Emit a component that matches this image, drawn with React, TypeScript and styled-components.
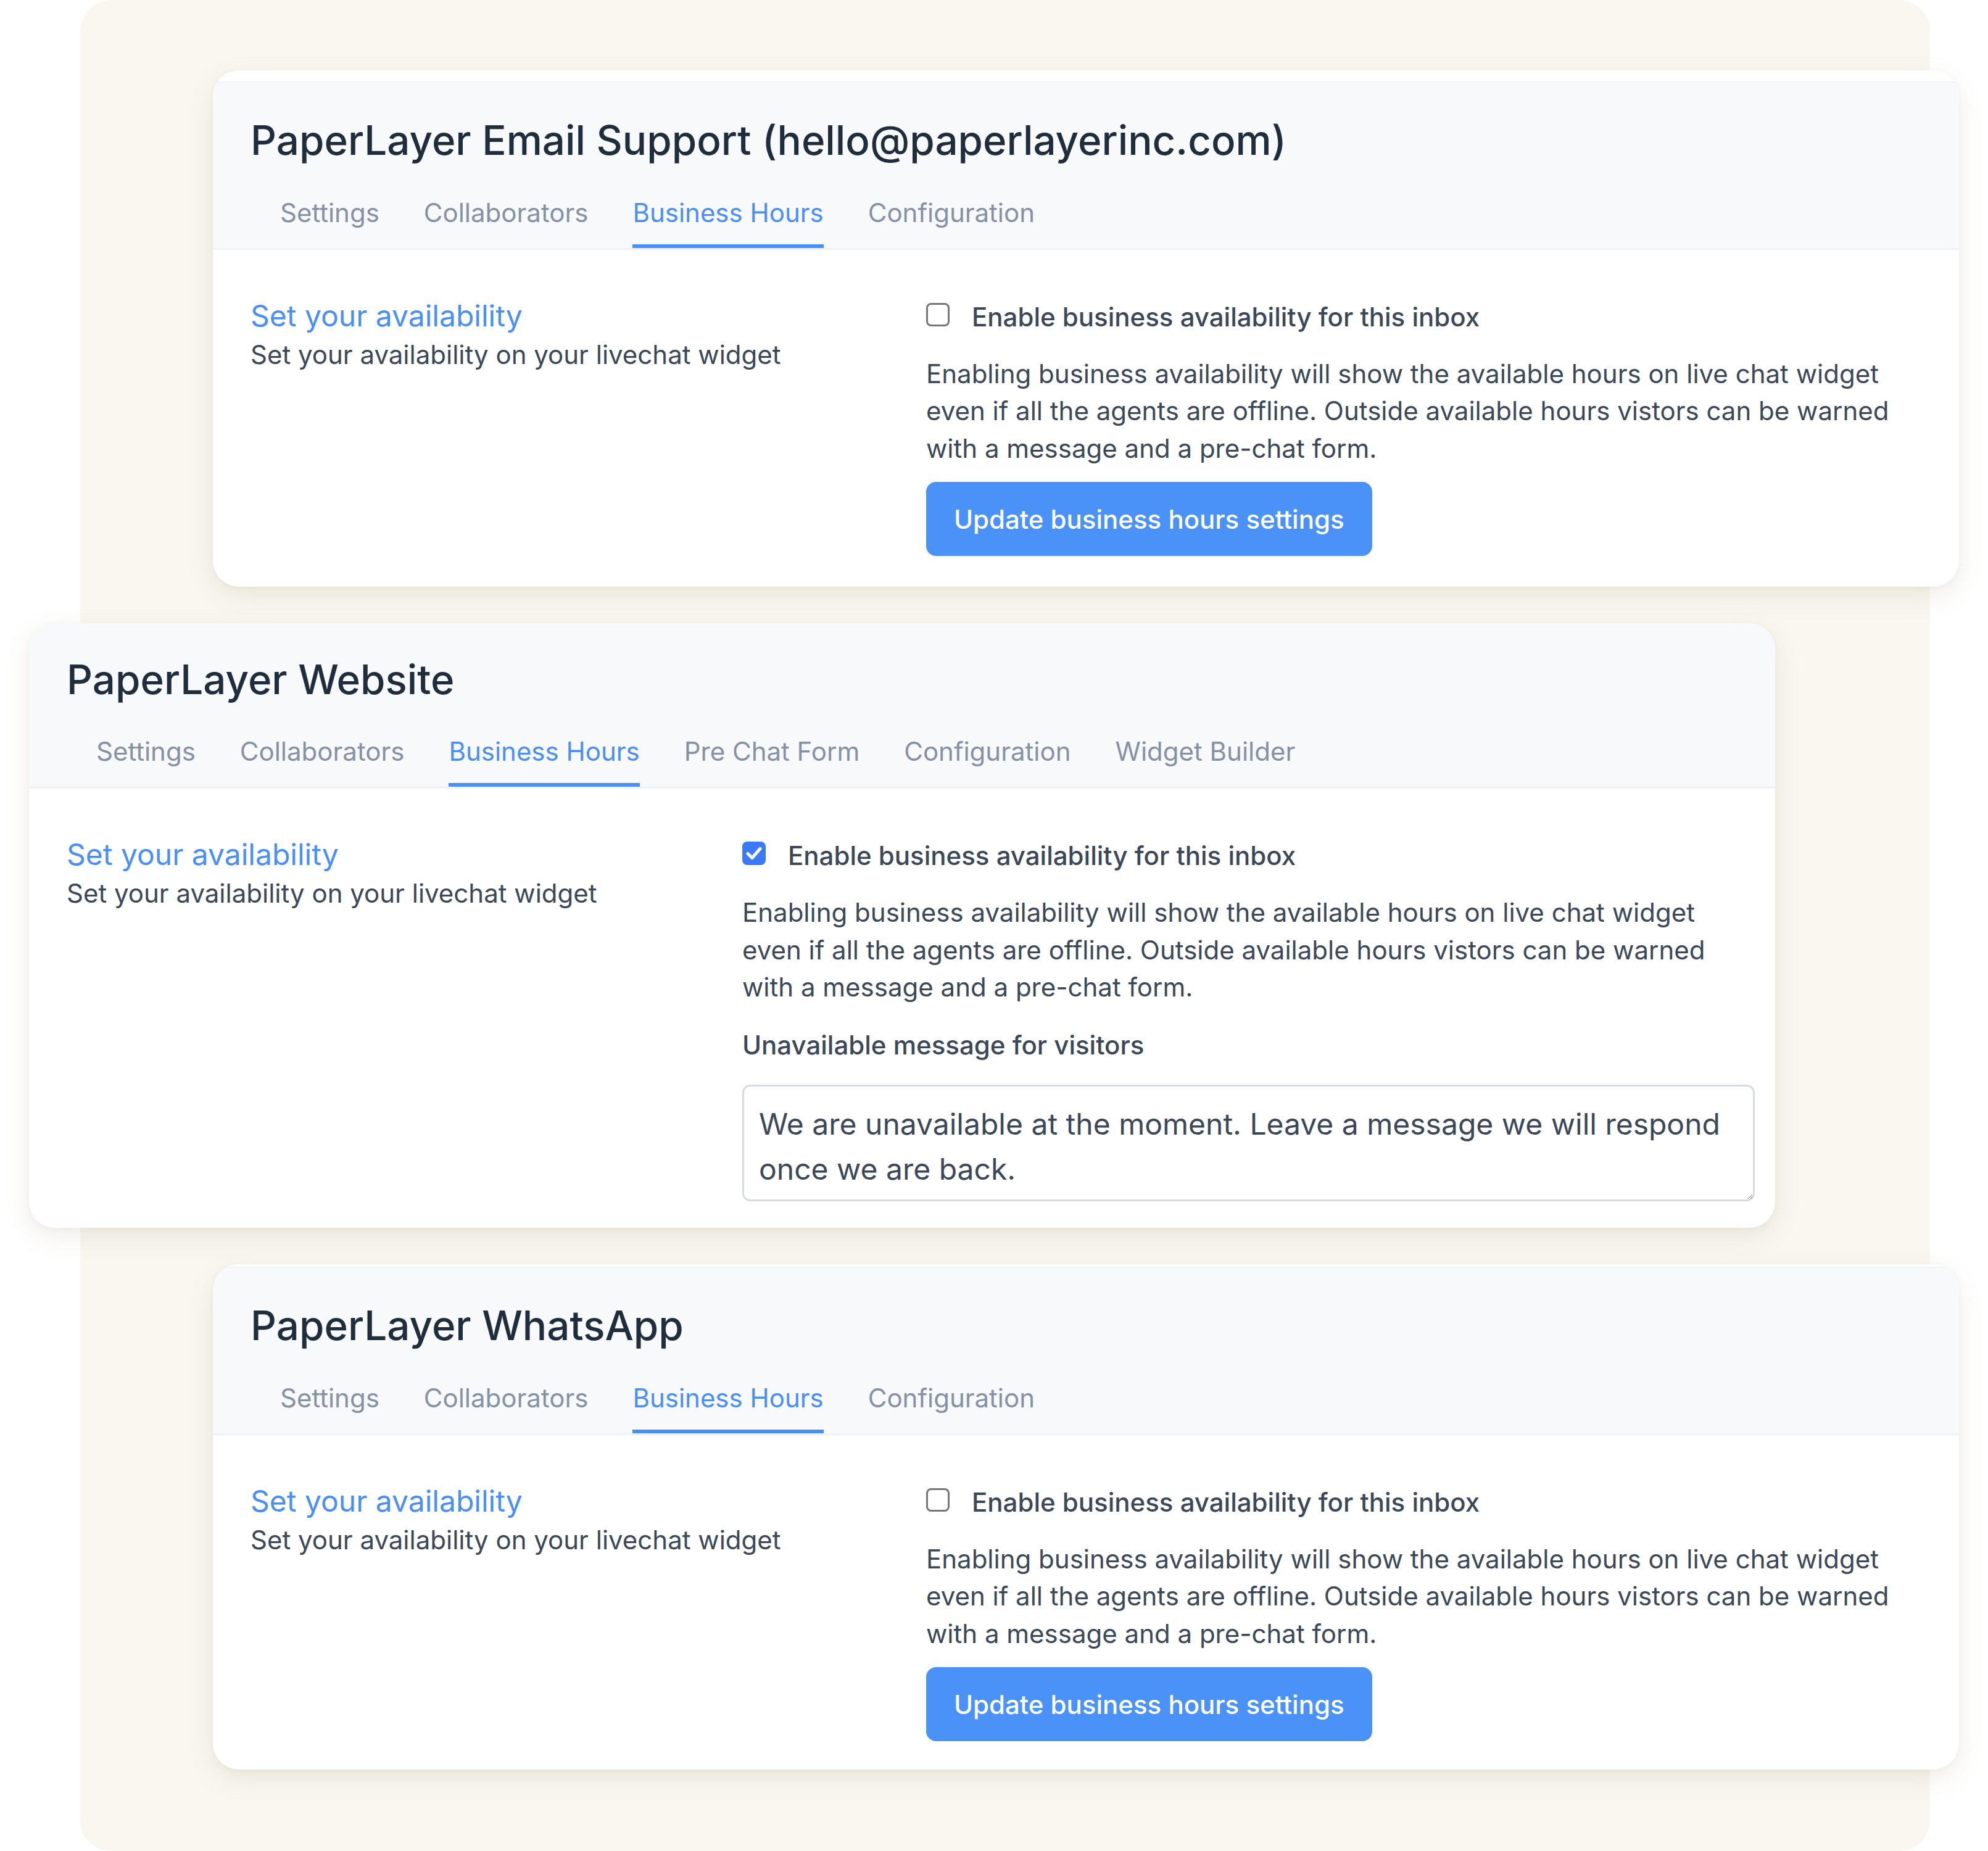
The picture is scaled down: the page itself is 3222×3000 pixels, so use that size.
import React from "react";
import styled, { createGlobalStyle } from "styled-components";

const GlobalStyle = createGlobalStyle`
  html, body { margin: 0; padding: 0; background: #ffffff; }
  body { font-family: Inter, "Noto Sans", "Liberation Sans", sans-serif; -webkit-font-smoothing: antialiased; }
  * { box-sizing: border-box; }
`;

const Page = styled.div`
  width: 3222px;
  height: 3000px;
  overflow: hidden;
  background: #ffffff;
`;

const Backdrop = styled.div`
  margin-left: 130px;
  width: 2998px;
  height: 3000px;
  background: #f9f7f0;
  border-radius: 50px;
  padding-top: 114px;
  display: flex;
  flex-direction: column;
  gap: 59px;
`;

const Card = styled.section<{ $offset: number; $strip: number }>`
  margin-left: ${(p) => p.$offset}px;
  width: 2830px;
  background: #ffffff;
  border-radius: 42px;
  overflow: hidden;
  padding-top: ${(p) => p.$strip}px;
  box-shadow: 0 14px 44px rgba(110, 90, 50, 0.11), 0 2px 8px rgba(110, 90, 50, 0.05);
  flex: none;
`;

const Header = styled.header<{ $line: boolean }>`
  background: #f8f9fb;
  border-top: ${(p) => (p.$line ? "2px solid #f0f3f7" : "0 solid transparent")};
  border-bottom: 3px solid #eef1f5;
  padding: ${(p) => (p.$line ? 55 : 53)}px 0 0 61px;
`;

const Title = styled.h1`
  margin: 0;
  font-size: 65.5px;
  line-height: 1.2;
  font-weight: 500;
  color: #1f2d3d;
`;

const TabList = styled.nav<{ $tight: boolean }>`
  display: flex;
  gap: 72px;
  padding-left: 48px;
  margin-top: ${(p) => (p.$tight ? 51 : 52)}px;
`;

const Tab = styled.span<{ $active?: boolean }>`
  font-size: 42px;
  line-height: 1.2;
  font-weight: 400;
  color: ${(p) => (p.$active ? "#4a8ff7" : "#8591a5")};
  padding-bottom: 26px;
  border-bottom: 6px solid ${(p) => (p.$active ? "#4a8ff7" : "transparent")};
  white-space: nowrap;
`;

const Body = styled.div<{ $bottom: number }>`
  display: flex;
  padding: 78px 33px ${(p) => p.$bottom}px 61px;
`;

const Intro = styled.div`
  flex: 0 0 1095px;
`;

const IntroTitle = styled.h2`
  margin: 0;
  font-size: 48px;
  line-height: 1.2;
  font-weight: 400;
  color: #4a8ff7;
`;

const IntroText = styled.p`
  margin: 4px 0 0;
  font-size: 42px;
  line-height: 1.45;
  color: #3c4858;
`;

const Settings = styled.div`
  flex: 1;
  min-width: 0;
  display: flex;
  flex-direction: column;
  align-items: flex-start;
  padding-top: 1px;
`;

const CheckRow = styled.label`
  display: flex;
  align-items: flex-start;
  gap: 36px;
`;

const Box = styled.span<{ $checked: boolean }>`
  flex: none;
  width: 38px;
  height: 38px;
  margin-top: 7px;
  border-radius: 8px;
  border: ${(p) => (p.$checked ? "0" : "3px solid #767676")};
  background: ${(p) => (p.$checked ? "#3a7af5" : "#ffffff")};
  display: flex;
  align-items: center;
  justify-content: center;
`;

const CheckLabel = styled.span`
  font-size: 42px;
  line-height: 60px;
  font-weight: 500;
  color: #3c4858;
`;

const Help = styled.p`
  margin: 32px 0 0;
  max-width: 1585px;
  font-size: 42px;
  line-height: 60.5px;
  color: #3c4858;
`;

const FieldLabel = styled.div`
  margin-top: 33px;
  font-size: 42px;
  line-height: 60px;
  font-weight: 500;
  color: #3c4858;
`;

const MessageInput = styled.textarea`
  margin-top: 34px;
  width: 100%;
  height: 189px;
  border: 3px solid #d3dce8;
  border-radius: 13px;
  padding: 24px 24px;
  font-family: Inter, "Noto Sans", "Liberation Sans", sans-serif;
  font-size: 48px;
  line-height: 73px;
  color: #3c4858;
  background: #ffffff;
  outline: none;
`;

const PrimaryButton = styled.button`
  margin-top: 24px;
  height: 120px;
  padding: 0 45px;
  border: none;
  border-radius: 16px;
  background: #4a92f8;
  color: #ffffff;
  font-family: Inter, "Noto Sans", "Liberation Sans", sans-serif;
  font-size: 42px;
  font-weight: 500;
`;

const Check = () => (
  <svg width="26" height="22" viewBox="0 0 26 22" fill="none">
    <path d="M3 11.5 L10 18.5 L23 3.5" stroke="#ffffff" strokeWidth="5" strokeLinecap="round" strokeLinejoin="round" />
  </svg>
);

type InboxProps = {
  name: string;
  tabs: string[];
  offset: number;
  strip: number;
  bottom: number;
  enabled?: boolean;
};

const HELP =
  "Enabling business availability will show the available hours on live chat widget even if all the agents are offline. Outside available hours vistors can be warned with a message and a pre-chat form.";

const InboxCard = ({ name, tabs, offset, strip, bottom, enabled = false }: InboxProps) => (
  <Card $offset={offset} $strip={strip}>
    <Header $line={strip > 0}>
      <Title>{name}</Title>
      <TabList $tight={strip === 0}>
        {tabs.map((t) => (
          <Tab key={t} $active={t === "Business Hours"}>
            {t}
          </Tab>
        ))}
      </TabList>
    </Header>
    <Body $bottom={bottom}>
      <Intro>
        <IntroTitle>Set your availability</IntroTitle>
        <IntroText>Set your availability on your livechat widget</IntroText>
      </Intro>
      <Settings>
        <CheckRow>
          <Box $checked={enabled}>{enabled && <Check />}</Box>
          <CheckLabel>Enable business availability for this inbox</CheckLabel>
        </CheckRow>
        <Help>{HELP}</Help>
        {enabled ? (
          <>
            <FieldLabel>Unavailable message for visitors</FieldLabel>
            <MessageInput defaultValue="We are unavailable at the moment. Leave a message we will respond once we are back." />
          </>
        ) : (
          <PrimaryButton>Update business hours settings</PrimaryButton>
        )}
      </Settings>
    </Body>
  </Card>
);

export default function App() {
  return (
    <Page>
      <GlobalStyle />
      <Backdrop>
        <InboxCard
          name="PaperLayer Email Support (hello@paperlayerinc.com)"
          tabs={["Settings", "Collaborators", "Business Hours", "Configuration"]}
          offset={215}
          strip={18}
          bottom={50}
        />
        <InboxCard
          name="PaperLayer Website"
          tabs={["Settings", "Collaborators", "Business Hours", "Pre Chat Form", "Configuration", "Widget Builder"]}
          offset={-83}
          strip={0}
          bottom={43}
          enabled
        />
        <InboxCard
          name="PaperLayer WhatsApp"
          tabs={["Settings", "Collaborators", "Business Hours", "Configuration"]}
          offset={215}
          strip={4}
          bottom={46}
        />
      </Backdrop>
    </Page>
  );
}
